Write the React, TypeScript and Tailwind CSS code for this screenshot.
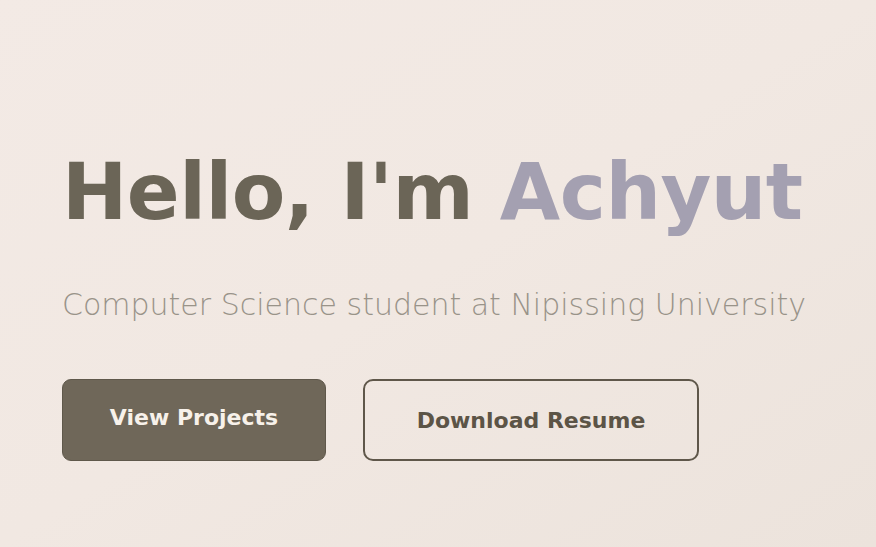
export default function App() {
  return (
    <div className="min-h-[547px] w-full bg-gradient-to-br from-[#f3eae5] via-[#f1e8e2] to-[#ece3dc] font-['DejaVu_Sans',sans-serif]">
      <section className="flex flex-col items-start px-[62px] pt-[153px]">
        <h1 className="whitespace-nowrap text-[78px] font-bold leading-none tracking-[-0.5px] text-[#6b6557]">
          Hello, I'm <span className="text-[#a4a0b1]">Achyut</span>
        </h1>
        <p className="mt-[59px] whitespace-nowrap text-[30px] font-light leading-none text-[#999389]">
          Computer Science student at Nipissing University
        </p>
        <div className="mt-[59px] flex gap-[37px]">
          <button className="flex h-[82px] w-[264px] items-center justify-center rounded-[9px] border border-[#5f584b] bg-[#6f6759] pb-[6px] text-[22px] font-semibold text-[#f7f1ea]">
            View Projects
          </button>
          <button className="flex h-[82px] w-[336px] items-center justify-center rounded-[10px] border-2 border-[#5f574a] text-[22px] font-semibold text-[#5c5446]">
            Download Resume
          </button>
        </div>
      </section>
    </div>
  )
}
